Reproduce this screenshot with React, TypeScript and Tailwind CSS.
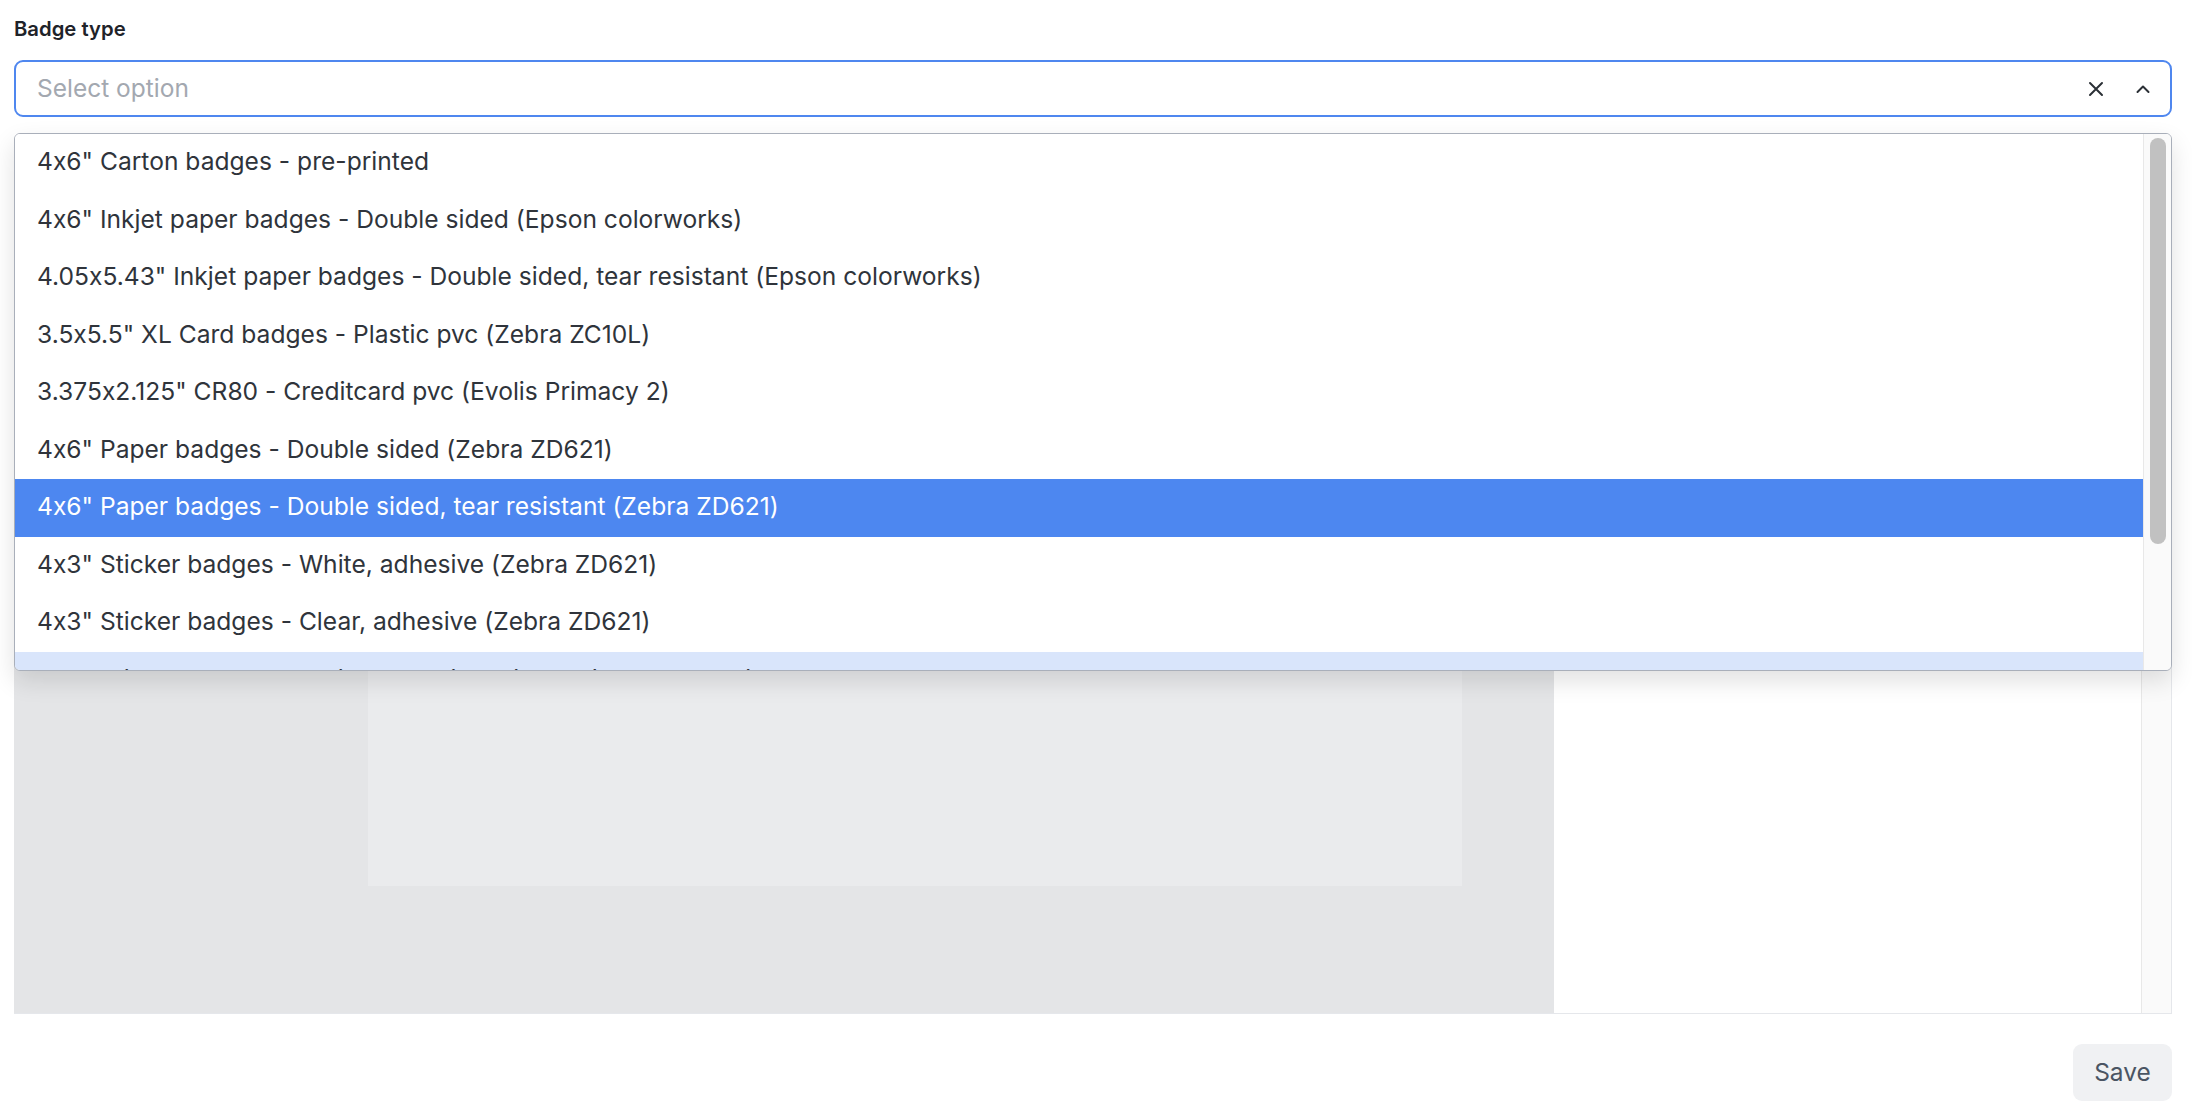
import React from "react";

const options = [
  '4x6" Carton badges - pre-printed',
  '4x6" Inkjet paper badges - Double sided (Epson colorworks)',
  '4.05x5.43" Inkjet paper badges - Double sided, tear resistant (Epson colorworks)',
  '3.5x5.5" XL Card badges - Plastic pvc (Zebra ZC10L)',
  '3.375x2.125" CR80 - Creditcard pvc (Evolis Primacy 2)',
  '4x6" Paper badges - Double sided (Zebra ZD621)',
  '4x6" Paper badges - Double sided, tear resistant (Zebra ZD621)',
  '4x3" Sticker badges - White, adhesive (Zebra ZD621)',
  '4x3" Sticker badges - Clear, adhesive (Zebra ZD621)',
  '4x3" Sticker badges - White, adhesive, die-cut (Zebra ZD621)',
];

const ACTIVE = 6;
const HOVER = 9;

function CloseIcon() {
  return (
    <svg width="18" height="18" viewBox="0 0 18 18" fill="none" stroke="#2b3036" strokeWidth="2" strokeLinecap="round">
      <path d="M3 3l12 12M15 3L3 15" />
    </svg>
  );
}

function ChevronUp() {
  return (
    <svg width="18" height="18" viewBox="0 0 18 18" fill="none" stroke="#2b3036" strokeWidth="2" strokeLinecap="round" strokeLinejoin="round">
      <path d="M3.5 12L9 6.5l5.5 5.5" />
    </svg>
  );
}

function OptionRow({ label, index }: { label: string; index: number }) {
  const cls =
    index === ACTIVE
      ? "bg-[#4d87f0] text-white"
      : index === HOVER
        ? "bg-[#d9e5fb] text-[#2f343b]"
        : "bg-white text-[#2f343b]";
  return (
    <div className={`h-[57.5px] shrink-0 flex items-center pl-[22px] pb-[2px] text-[24.6px] whitespace-nowrap ${cls}`}>
      {label}
    </div>
  );
}

export default function App() {
  return (
    <div
      className="min-h-screen bg-white pl-[14px] pr-[20px] pt-[17px] [font-feature-settings:'calt'_0]"
      style={{ fontFamily: "Inter, 'Liberation Sans', sans-serif" }}
    >
      <div className="text-[20.3px] leading-[24px] font-semibold text-[#1f2329]">Badge type</div>

      <div className="relative mt-[19px]">
        {/* Select input */}
        <div className="h-[57px] flex items-center border-2 border-[#4f87ef] rounded-[9px] pl-[21px] pr-[18px]">
          <span className="flex-1 text-[24.5px] text-[#a3a8b0]">Select option</span>
          <div className="flex items-center gap-[29px]">
            <CloseIcon />
            <ChevronUp />
          </div>
        </div>

        {/* Dropdown menu */}
        <div className="absolute left-0 right-0 top-[73px] z-10 h-[538px] flex overflow-hidden bg-white border border-[#a9afba] rounded-[6px] shadow-[0_10px_24px_rgba(0,0,0,0.12)]">
          <div className="flex-1 flex flex-col overflow-hidden">
            {options.map((o, i) => (
              <OptionRow key={i} label={o} index={i} />
            ))}
          </div>
          <div className="w-[28px] shrink-0 bg-[#fafafa] border-l border-[#e8e8e8] pt-[4px] flex justify-center">
            <div className="w-[16px] h-[406px] rounded-full bg-[#c1c1c1]" />
          </div>
        </div>
      </div>

      {/* Preview area */}
      <div className="mt-[22px] h-[875px] flex border-b border-r border-[#e5e7eb]">
        <div className="w-[1540px] shrink-0 bg-[#e4e5e7] py-[127px]">
          <div className="ml-[354px] w-[1094px] h-full bg-[#eaebed]" />
        </div>
        <div className="flex-1 bg-white" />
        <div className="w-[30px] shrink-0 bg-[#fafafa] border-l border-[#e8e8e8]" />
      </div>

      <div className="mt-[30px] flex justify-end">
        <button className="h-[57px] w-[99px] rounded-[9px] bg-[#f0f1f3] text-[24.5px] text-[#4b5563]">
          Save
        </button>
      </div>
    </div>
  );
}
